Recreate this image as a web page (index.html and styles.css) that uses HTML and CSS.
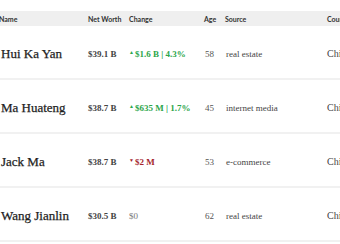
FILE: index.html
```html
<!DOCTYPE html>
<html>
<head>
<meta charset="utf-8">
<link rel="stylesheet" href="styles.css">
</head>
<body>
<div class="table">
  <div class="head row">
    <div class="c-name">Name</div>
    <div class="c-worth">Net Worth</div>
    <div class="c-change">Change</div>
    <div class="c-age">Age</div>
    <div class="c-src">Source</div>
    <div class="c-country">Country</div>
  </div>
  <div class="body row">
    <div class="c-name name">Hui Ka Yan</div>
    <div class="c-worth worth">$39.1 B</div>
    <div class="c-change chg up"><span class="arrow">▲</span>$1.6 B | 4.3%</div>
    <div class="c-age age">58</div>
    <div class="c-src src">real estate</div>
    <div class="c-country country">China</div>
  </div>
  <div class="body row">
    <div class="c-name name">Ma Huateng</div>
    <div class="c-worth worth">$38.7 B</div>
    <div class="c-change chg up"><span class="arrow">▲</span>$635 M | 1.7%</div>
    <div class="c-age age">45</div>
    <div class="c-src src">internet media</div>
    <div class="c-country country">China</div>
  </div>
  <div class="body row">
    <div class="c-name name">Jack Ma</div>
    <div class="c-worth worth">$38.7 B</div>
    <div class="c-change chg down"><span class="arrow">▼</span>$2 M</div>
    <div class="c-age age">53</div>
    <div class="c-src src">e-commerce</div>
    <div class="c-country country">China</div>
  </div>
  <div class="body row">
    <div class="c-name name">Wang Jianlin</div>
    <div class="c-worth worth">$30.5 B</div>
    <div class="c-change chg zero">$0</div>
    <div class="c-age age">62</div>
    <div class="c-src src">real estate</div>
    <div class="c-country country">China</div>
  </div>
</div>
</body>
</html>
```

FILE: styles.css
```css
html, body {
  margin: 0;
  padding: 0;
  background: #ffffff;
  overflow: hidden;
}
.table {
  padding-top: 11px;
  width: 380px;
}
.row {
  display: grid;
  grid-template-columns: 88px 41px 75px 21px 102px 60px;
  align-items: center;
}
.head {
  height: 15px;
  background: #efefef;
  font-family: "Lato", "Liberation Sans", sans-serif;
  font-weight: 700;
  font-size: 7px;
  color: #333333;
}
.head .c-name { margin-left: -1px; }
.body {
  height: 52px;
  border-bottom: 2px solid #f1f1f1;
  font-family: "Liberation Serif", serif;
  color: #333333;
}
.body > div { padding-top: 3px; }
.name {
  font-size: 13px;
  font-weight: 400;
  color: #1e1e1e;
  -webkit-text-stroke: 0.25px #1e1e1e;
  padding-left: 1px;
}
.worth {
  font-size: 9px;
  font-weight: 700;
  color: #444444;
}
.chg {
  font-size: 9px;
  font-weight: 700;
}
.up { color: #2ca64a; }
.down { color: #a5262d; }
.zero { color: #777777; font-weight: 400; }
.arrow {
  font-size: 5px;
  vertical-align: 3px;
  margin-right: 1px;
}
.age {
  font-size: 9px;
  color: #555555;
  padding-left: 1px;
}
.src {
  font-size: 9px;
  color: #444444;
  padding-left: 1px;
}
.country {
  font-size: 10px;
  color: #444444;
}
```
